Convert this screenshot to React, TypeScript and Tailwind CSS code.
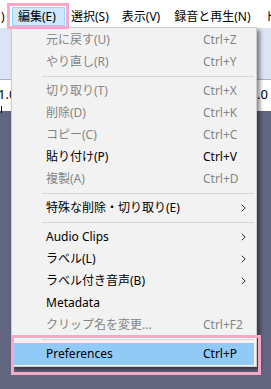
import React from "react";

type Item =
  | { kind: "sep" }
  | { kind: "item"; label: string; shortcut?: string; sub?: boolean; disabled?: boolean; active?: boolean };

const items: Item[] = [
  { kind: "item", label: "元に戻す(U)", shortcut: "Ctrl+Z", disabled: true },
  { kind: "item", label: "やり直し(R)", shortcut: "Ctrl+Y", disabled: true },
  { kind: "sep" },
  { kind: "item", label: "切り取り(T)", shortcut: "Ctrl+X", disabled: true },
  { kind: "item", label: "削除(D)", shortcut: "Ctrl+K", disabled: true },
  { kind: "item", label: "コピー(C)", shortcut: "Ctrl+C", disabled: true },
  { kind: "item", label: "貼り付け(P)", shortcut: "Ctrl+V" },
  { kind: "item", label: "複製(A)", shortcut: "Ctrl+D", disabled: true },
  { kind: "sep" },
  { kind: "item", label: "特殊な削除・切り取り(E)", sub: true },
  { kind: "sep" },
  { kind: "item", label: "Audio Clips", sub: true },
  { kind: "item", label: "ラベル(L)", sub: true },
  { kind: "item", label: "ラベル付き音声(B)", sub: true },
  { kind: "item", label: "Metadata" },
  { kind: "item", label: "クリップ名を変更...", shortcut: "Ctrl+F2", disabled: true },
  { kind: "sep" },
  { kind: "item", label: "Preferences", shortcut: "Ctrl+P", active: true },
];

function Chevron() {
  return (
    <svg width="5" height="8" viewBox="0 0 5 8" className="block">
      <path d="M0.8 0.8 L4.2 4 L0.8 7.2" fill="none" stroke="#333" strokeWidth="1" />
    </svg>
  );
}

export default function App() {
  return (
    <div
      className="relative w-[271px] h-[389px] overflow-hidden bg-[#62657f] text-[12px] text-black"
      style={{ fontFamily: '"Noto Sans", "Noto Sans CJK JP", sans-serif' }}
    >
      {/* menu bar */}
      <div className="h-[28px] bg-white flex items-start pt-[7px] whitespace-nowrap overflow-hidden">
        <span className="shrink-0 w-[12px] h-[19px] flex items-center pl-[1px] leading-none">)</span>
        <span className="shrink-0 w-[53px] h-[19px] flex items-center pl-[5px] border border-[#99d1ff] bg-[#cce8ff] leading-none">
          編集(E)
        </span>
        <span className="shrink-0 h-[19px] flex items-center px-[6px] leading-none">選択(S)</span>
        <span className="shrink-0 h-[19px] flex items-center px-[7px] leading-none">表示(V)</span>
        <span className="shrink-0 h-[19px] flex items-center px-[7px] leading-none">録音と再生(N)</span>
        <span className="shrink-0 h-[19px] flex items-center px-[7px] leading-none">トラック(T)</span>
      </div>

      {/* toolbar strip */}
      <div className="h-[52px] bg-[#dce3f4] border-b border-[#a9b0c4]" />

      {/* ruler */}
      <div className="h-[31px] bg-white flex justify-between items-start pt-[8px] text-[13px] leading-none">
        <div className="flex flex-col items-start -ml-[2px]">
          <span>1.0</span>
          <span className="mt-[5px] ml-[3px] w-px h-[7px] bg-black" />
        </div>
        <div className="flex flex-col items-start mr-[3px]">
          <span>2.0</span>
          <span className="mt-[5px] ml-[4px] w-px h-[7px] bg-black" />
        </div>
      </div>

      {/* dropdown menu */}
      <div className="absolute left-[11px] top-[27px] w-[246px] bg-[#f2f2f2] border border-[#cccccc] py-[1px] px-[2px] shadow-[3px_3px_4px_rgba(0,0,0,0.45)]">
        {items.map((it, i) =>
          it.kind === "sep" ? (
            <div key={i} className="h-[7px] flex items-center pl-[28px]">
              <div className="h-px w-full bg-[#d7d7d7]" />
            </div>
          ) : (
            <div
              key={i}
              className={
                "h-[22px] flex items-center whitespace-nowrap leading-none " +
                (it.active ? "bg-[#91c9f7] " : "") +
                (it.disabled ? "text-[#858585]" : "text-black")
              }
            >
              <span className="shrink-0 w-[189px] pl-[32px]">{it.label}</span>
              <span className="shrink-0 w-[38px]">{it.shortcut ?? ""}</span>
              <span className="shrink-0 w-[10px] flex items-center">{it.sub ? <Chevron /> : null}</span>
            </div>
          )
        )}
      </div>

      {/* annotation boxes */}
      <div className="absolute left-[7px] top-[3px] w-[62px] h-[26px] border-[3px] border-[#f5a9c6]" />
      <div className="absolute left-[11px] top-[335px] w-[250px] h-[40px] border-[3px] border-[#f5a9c6]" />
    </div>
  );
}
